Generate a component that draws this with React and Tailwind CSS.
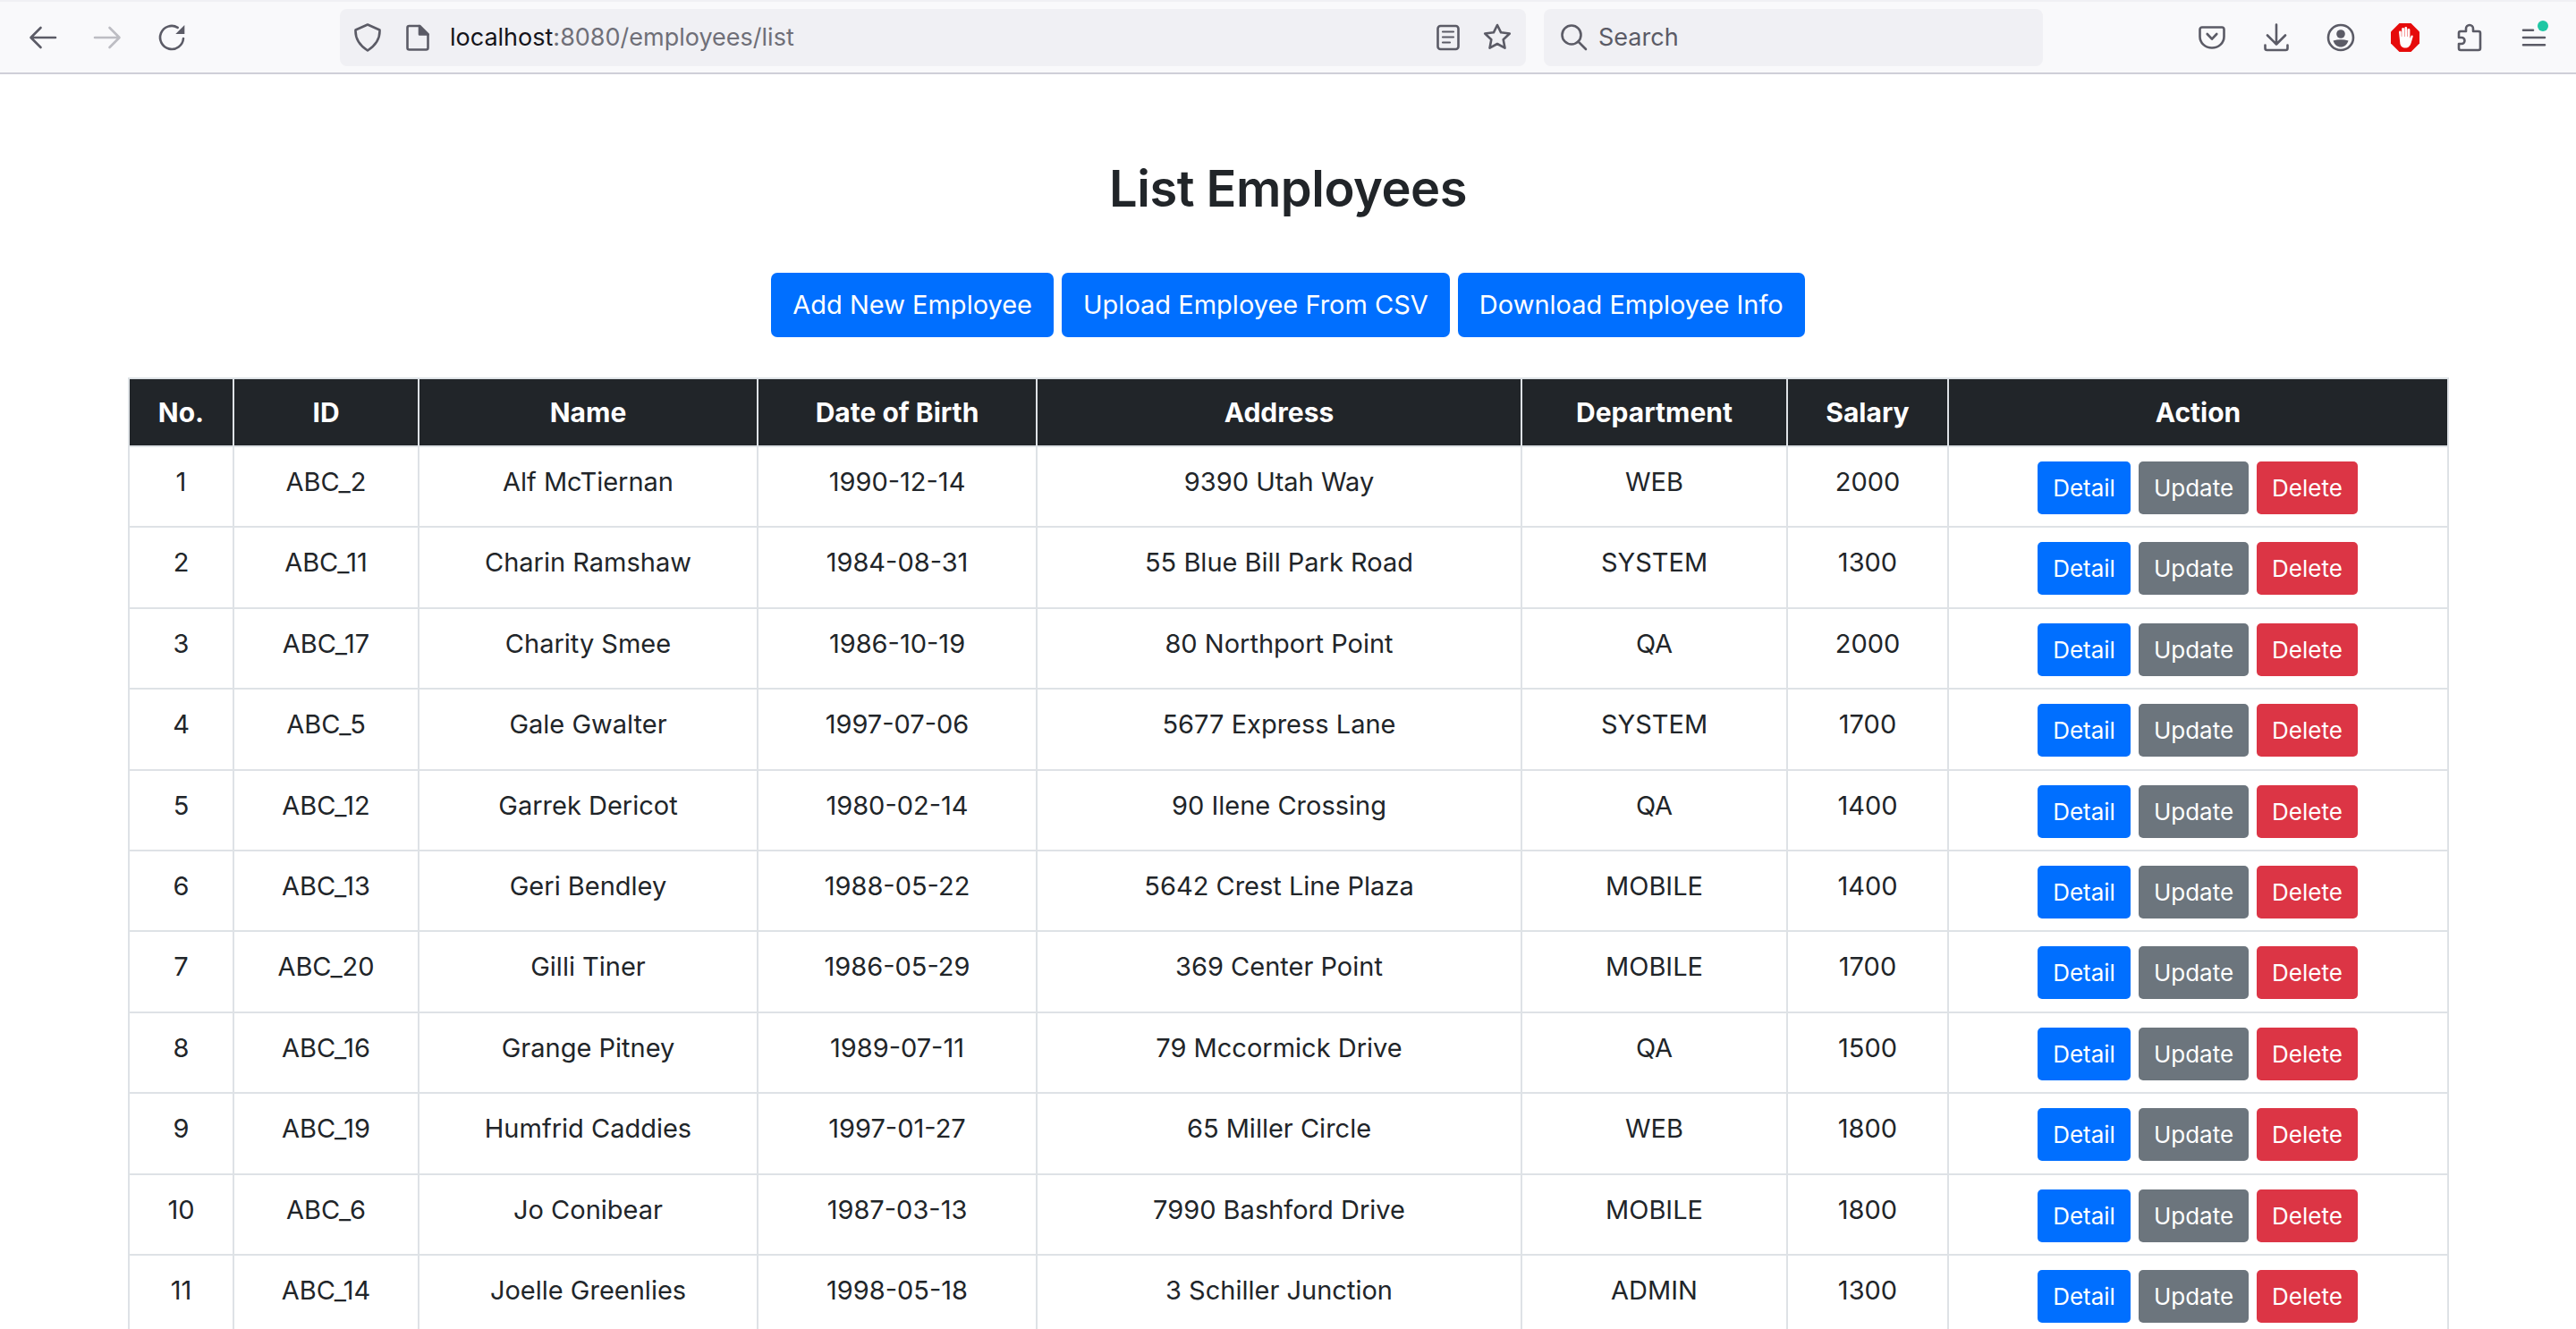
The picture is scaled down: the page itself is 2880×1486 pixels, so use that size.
import React from 'react';

const employees = [
  [1, 'ABC_2', 'Alf McTiernan', '1990-12-14', '9390 Utah Way', 'WEB', 2000],
  [2, 'ABC_11', 'Charin Ramshaw', '1984-08-31', '55 Blue Bill Park Road', 'SYSTEM', 1300],
  [3, 'ABC_17', 'Charity Smee', '1986-10-19', '80 Northport Point', 'QA', 2000],
  [4, 'ABC_5', 'Gale Gwalter', '1997-07-06', '5677 Express Lane', 'SYSTEM', 1700],
  [5, 'ABC_12', 'Garrek Dericot', '1980-02-14', '90 Ilene Crossing', 'QA', 1400],
  [6, 'ABC_13', 'Geri Bendley', '1988-05-22', '5642 Crest Line Plaza', 'MOBILE', 1400],
  [7, 'ABC_20', 'Gilli Tiner', '1986-05-29', '369 Center Point', 'MOBILE', 1700],
  [8, 'ABC_16', 'Grange Pitney', '1989-07-11', '79 Mccormick Drive', 'QA', 1500],
  [9, 'ABC_19', 'Humfrid Caddies', '1997-01-27', '65 Miller Circle', 'WEB', 1800],
  [10, 'ABC_6', 'Jo Conibear', '1987-03-13', '7990 Bashford Drive', 'MOBILE', 1800],
  [11, 'ABC_14', 'Joelle Greenlies', '1998-05-18', '3 Schiller Junction', 'ADMIN', 1300],
];

const headers = [
  ['No.', 'w-[117px]'],
  ['ID', 'w-[207px]'],
  ['Name', 'w-[379px]'],
  ['Date of Birth', 'w-[312px]'],
  ['Address', 'w-[542px]'],
  ['Department', 'w-[297px]'],
  ['Salary', 'w-[180px]'],
  ['Action', 'w-[559px]'],
];

const Icon = ({ children, color = '#5b5b66' }) => (
  <svg width="32" height="32" viewBox="0 0 32 32" fill="none" stroke={color} strokeWidth="2.6" strokeLinecap="round" strokeLinejoin="round">
    {children}
  </svg>
);

const BackIcon = ({ color }) => (
  <Icon color={color}><path d="M30 16H3M13.5 5 2.5 16l11 11" /></Icon>
);

const ForwardIcon = ({ color }) => (
  <Icon color={color}><path d="M2 16h27M18.5 5l11 11-11 11" /></Icon>
);

const ReloadIcon = () => (
  <Icon>
    <path d="M22.7 4.8A13 13 0 1 0 29 17" />
    <path d="M30.3 2v10h-10z" fill="#5b5b66" stroke="none" />
  </Icon>
);

const ShieldIcon = () => (
  <Icon><path d="M16 1.5 29.5 7.5c.5 10-4 17-13.5 23-9.5-6-14-13-13.5-23z" /></Icon>
);

const PageIcon = () => (
  <Icon>
    <path d="M6.5 3H18l9.5 9.5V27.5a2 2 0 0 1-2 2h-19a2 2 0 0 1-2-2V5a2 2 0 0 1 2-2z" />
    <path d="M18 3l9.5 9.5H18z" fill="#5b5b66" />
  </Icon>
);

const ReaderIcon = () => (
  <Icon>
    <rect x="4.5" y="3" width="23" height="26" rx="3" />
    <path d="M10 9.5h12M10 15.5h12M10 21.5h8" strokeWidth="2.2" />
  </Icon>
);

const StarIcon = () => (
  <Icon><path d="M16 2l4.1 8.3 9.7 1.2-7.1 6.7 1.8 9.5L16 23l-8.5 4.7 1.8-9.5-7.1-6.7 9.7-1.2z" /></Icon>
);

const SearchIcon = () => (
  <Icon>
    <circle cx="13" cy="13" r="10.5" />
    <path d="m20.5 20.5 8.5 8.5" />
  </Icon>
);

const PocketIcon = () => (
  <Icon>
    <path d="M5 4.5h22a2.5 2.5 0 0 1 2.5 2.5v8c0 7-6 12.5-13.5 12.5S2.500 22 2.500 15V7A2.500 2.500 0 0 1 5 4.500z" />
    <path d="m10.700 12 5.300 5.700 5.300-5.700" />
  </Icon>
);

const DownloadIcon = () => (
  <Icon><path d="M16 1.500v22M6 13.500l10 10 10-10M3.500 24.500V28a2 2 0 0 0 2 2h21a2 2 0 0 0 2-2v-3.500" /></Icon>
);

const AccountIcon = () => (
  <Icon>
    <circle cx="16" cy="16" r="14" />
    <circle cx="16" cy="12" r="4.800" fill="#5b5b66" stroke="none" />
    <path d="M7.500 19.500q8.500-2.500 17 0C23 24 20 26.500 16 26.500S9 24 7.500 19.500z" fill="#5b5b66" stroke="none" />
  </Icon>
);

// uBlock stop sign with the white hand
const BlockIcon = () => (
  <svg width="32" height="32" viewBox="0 0 32 32">
    <path d="M9.500 0h13L32 9.500v13L22.500 32h-13L0 22.500v-13z" fill="#e60b0b" />
    <path d="M9 10a1.400 1.400 0 0 1 2.800 0v5h.4V6.500a1.400 1.400 0 0 1 2.800 0V15h.4V5.500a1.400 1.400 0 0 1 2.800 0V15h.4V7.500a1.400 1.400 0 0 1 2.800 0V17l1-2.500c.6-1.600 2.800-1 2.300.6l-2 6.600c-1 3.500-3 5.800-6.600 5.800-3.800 0-5.900-2.500-5.900-6.500z" fill="#fff" />
  </svg>
);

const ExtensionIcon = () => (
  <Icon><path d="M4 11a2 2 0 0 1 2-2h6V6a4 4 0 0 1 8 0v3h6a2 2 0 0 1 2 2v17a2 2 0 0 1-2 2H6a2 2 0 0 1-2-2v-5h3a3.500 3.500 0 0 0 0-7H4z" /></Icon>
);

const MenuIcon = () => (
  <div className="relative">
    <Icon><path d="M4 7.700h11M4 16h24M4 24.300h24" /></Icon>
    <span className="absolute top-[-3px] right-0 w-[12px] h-[12px] rounded-full bg-[#1fc7a4]"></span>
  </div>
);

const ToolbarSlot = ({ children }) => (
  <div className="w-[72px] flex items-center justify-center shrink-0">{children}</div>
);

const Toolbar = () => (
  <div className="h-[83px] bg-[#f9f9fb] border-t-2 border-t-[#f0f0f4] border-b-2 border-b-[#cfcfd8] flex items-center pl-[12px]">
    <ToolbarSlot><BackIcon color="#5b5b66" /></ToolbarSlot>
    <ToolbarSlot><ForwardIcon color="#bdbdc3" /></ToolbarSlot>
    <ToolbarSlot><ReloadIcon /></ToolbarSlot>
    <div className="ml-[152px] w-[1326px] h-[64px] rounded-[8px] bg-[#f0f0f4] flex items-center pl-[15px] pr-[16px] shrink-0">
      <ShieldIcon />
      <div className="ml-[24px]"><PageIcon /></div>
      <div className="ml-[20px] mt-[2px] text-[27px] text-[#15141a]">
        localhost<span className="text-[#6f6f78]">:8080/employees/list</span>
      </div>
      <div className="ml-auto flex items-center gap-[23px]">
        <ReaderIcon />
        <StarIcon />
      </div>
    </div>
    <div className="ml-[20px] w-[558px] h-[64px] rounded-[8px] bg-[#f0f0f4] flex items-center pl-[18px] shrink-0">
      <SearchIcon />
      <span className="ml-[11px] mt-[2px] text-[27px] text-[#5b5b66]">Search</span>
    </div>
    <div className="ml-[153px] flex items-center">
      <ToolbarSlot><PocketIcon /></ToolbarSlot>
      <ToolbarSlot><DownloadIcon /></ToolbarSlot>
      <ToolbarSlot><AccountIcon /></ToolbarSlot>
      <ToolbarSlot><BlockIcon /></ToolbarSlot>
      <ToolbarSlot><ExtensionIcon /></ToolbarSlot>
      <ToolbarSlot><MenuIcon /></ToolbarSlot>
    </div>
  </div>
);

const TopButton = ({ children }) => (
  <button className="h-[72px] px-[24px] rounded-[7px] bg-[#006fff] text-white text-[29px] whitespace-nowrap">
    {children}
  </button>
);

const RowButton = ({ className, children }) => (
  <button className={`h-[59px] px-[17px] rounded-[5px] text-white text-[26px] ${className}`}>{children}</button>
);

const App = () => (
  <div className="h-[1486px] overflow-hidden bg-white text-[#212529] font-['Inter',sans-serif]">
    <Toolbar />
    <h1 className="mt-[93px] text-center text-[56px] leading-[70px] font-semibold tracking-[-0.5px]">List Employees</h1>
    <div className="mt-[59px] flex justify-center gap-[9px]">
      <TopButton>Add New Employee</TopButton>
      <TopButton>Upload Employee From CSV</TopButton>
      <TopButton>Download Employee Info</TopButton>
    </div>
    <div className="mt-[45px] pl-[143px] pr-[144px]">
      <table className="w-full table-fixed border-collapse text-[29px] text-center">
        <thead>
          <tr className="bg-[#212529] text-white">
            {headers.map(([label, width]) => (
              <th key={label} className={`${width} h-[76px] border-2 border-[#dee2e6] text-[30px] font-bold`}>{label}</th>
            ))}
          </tr>
        </thead>
        <tbody>
          {employees.map(row => (
            <tr key={row[0]} className="h-[90.4px]">
              {row.map((value, i) => (
                <td key={i} className="border-2 border-[#dee2e6] align-top pt-[16px] leading-[45px]">{value}</td>
              ))}
              <td className="border-2 border-[#dee2e6] align-top pt-[16px]">
                <div className="flex justify-center gap-[9px] pr-[1px]">
                  <RowButton className="bg-[#006fff]">Detail</RowButton>
                  <RowButton className="bg-[#6c757d]">Update</RowButton>
                  <RowButton className="bg-[#dc3545]">Delete</RowButton>
                </div>
              </td>
            </tr>
          ))}
        </tbody>
      </table>
    </div>
  </div>
);

export default App;
